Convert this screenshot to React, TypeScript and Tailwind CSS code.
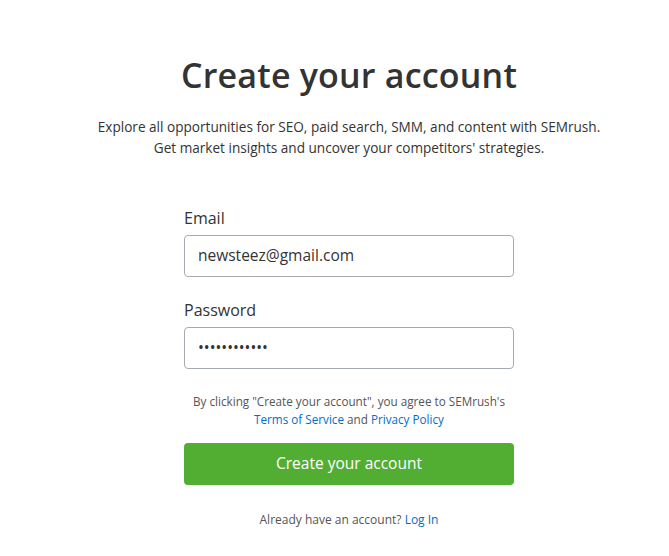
export default function App() {
  return (
    <div
      className="min-h-[556px] w-full bg-white text-[#333333] flex flex-col items-center pl-[29px]"
      style={{ fontFamily: '"Open Sans", "Noto Sans", sans-serif' }}
    >
      <h1 className="mt-[53px] text-[34px] leading-[44px] font-semibold tracking-[0.2px] text-[#333333]">
        Create your account
      </h1>
      <p className="mt-[19px] text-[13.6px] leading-[21px] text-center text-[#333333]">
        Explore all opportunities for SEO, paid search, SMM, and content with SEMrush.
        <br />
        Get market insights and uncover your competitors' strategies.
      </p>
      <form className="mt-[50px] w-[330px] flex flex-col" onSubmit={(e) => e.preventDefault()}>
        <label className="text-[16px] leading-[20px] text-[#333333]">Email</label>
        <div className="mt-[7px] h-[42px] rounded-[4px] border border-[#a6abb1] px-[13px] flex items-center text-[15.5px] text-[#333333]">
          newsteez@gmail.com
        </div>
        <label className="mt-[23px] text-[16px] leading-[20px] text-[#333333]">Password</label>
        <div className="mt-[7px] h-[42px] rounded-[4px] border border-[#a6abb1] px-[13px] flex items-center text-[15.5px] text-[#333333] tracking-[0px]">
          ••••••••••••
        </div>
        <p className="mt-[23px] text-[11.7px] leading-[18px] text-center text-[#555555]">
          By clicking "Create your account", you agree to SEMrush's
          <br />
          <a className="text-[#006dca]">Terms of Service</a> and{" "}
          <a className="text-[#006dca]">Privacy Policy</a>
        </p>
        <button
          type="button"
          className="mt-[15px] h-[42px] rounded-[4px] bg-[#52ae32] text-white text-[15.5px] font-medium"
        >
          Create your account
        </button>
        <p className="mt-[26px] text-[12px] leading-[18px] text-center text-[#555555]">
          Already have an account? <a className="text-[#006dca]">Log In</a>
        </p>
      </form>
    </div>
  );
}
